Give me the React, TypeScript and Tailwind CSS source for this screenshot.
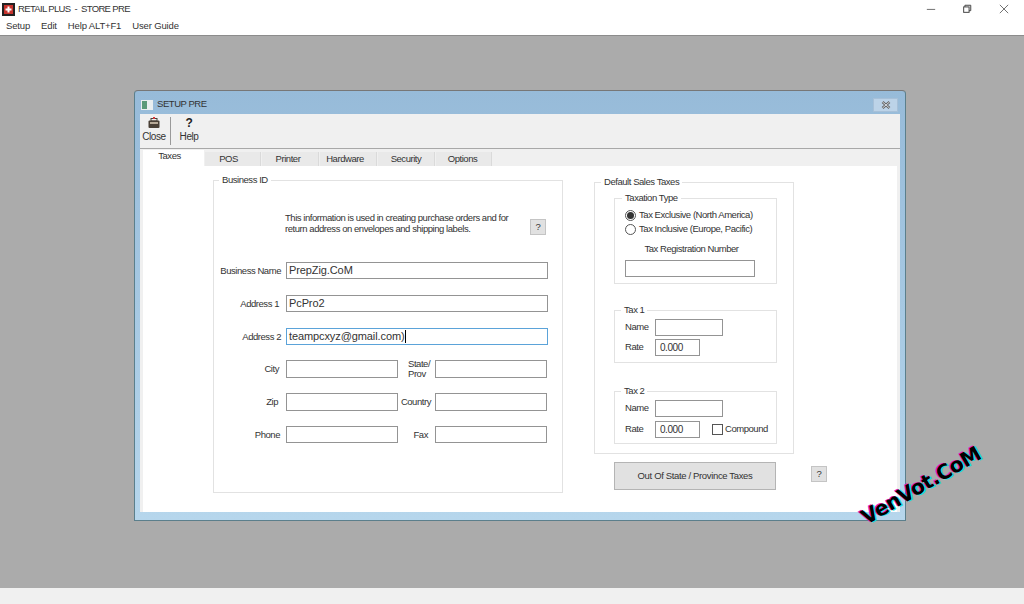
import React from "react";

const font = { fontFamily: '"Liberation Sans", Arial, sans-serif' };

function Input({ value, w, h = "h-[17px]", focus, caret }: { value?: string; w: string; h?: string; focus?: boolean; caret?: boolean }) {
  return (
    <div
      className={`${w} ${h} shrink-0 bg-white border flex items-center pl-[2px] text-[11px] tracking-[-0.1px] text-[#333] leading-none ${
        focus ? "border-[#5ba3d9]" : "border-[#949494]"
      }`}
    >
      {value}
      {caret && <span className="w-px h-[13px] bg-black" />}
    </div>
  );
}

function Label({ children, w = "w-[64px]", pad = "" }: { children: React.ReactNode; w?: string; pad?: string }) {
  return <div className={`${w} ${pad} shrink-0 whitespace-nowrap text-right text-[9.5px] leading-[10px] text-[#333]`}>{children}</div>;
}

function Legend({ children, className }: { children: React.ReactNode; className: string }) {
  return <div className={`absolute -top-[7px] bg-white px-[3px] text-[9.5px] leading-[11px] text-[#333] ${className}`}>{children}</div>;
}

function Help({ className = "" }: { className?: string }) {
  return (
    <div className={`w-4 h-4 shrink-0 bg-[#e1e1e1] border border-[#c4c4c4] flex items-center justify-center text-[9.5px] text-[#333] ${className}`}>?</div>
  );
}

function Tab({ label, w, active, pad = "" }: { label: string; w: string; active?: boolean; pad?: string }) {
  return (
    <div
      className={`${w} ${pad} flex items-center justify-center text-[9.5px] text-[#333] ${
        active ? "bg-white h-[16px] pb-[3px]" : "bg-[#e9e9e9] h-[14px] border-r border-[#dadada]"
      }`}
    >
      {label}
    </div>
  );
}

function FieldRow({ label, value, focus, caret, className, pad }: { label: string; value?: string; focus?: boolean; caret?: boolean; className: string; pad?: string }) {
  return (
    <div className={`flex items-center gap-[5px] ${className}`}>
      <Label pad={pad}>{label}</Label>
      <Input w="w-[262px]" value={value} focus={focus} caret={caret} />
    </div>
  );
}

function SplitRow({ a, b, className, h, padA, padB }: { a: string; b: React.ReactNode; className: string; h: string; padA: string; padB: string }) {
  return (
    <div className={`flex items-center ${h} ${className}`}>
      <Label pad={padA}>{a}</Label>
      <div className="w-[5px]" />
      <Input w="w-[112px]" h={h} />
      <Label w="w-[33px]" pad={padB}>{b}</Label>
      <div className="w-[4px]" />
      <Input w="w-[112px]" h={h} />
    </div>
  );
}

export default function App() {
  return (
    <div className="w-[1024px] h-[604px] overflow-hidden flex flex-col bg-[#ababab] relative tracking-[-0.45px]" style={font}>
      <div className="h-[36px] bg-white border-b border-[#8c8c8c] shrink-0 flex flex-col">
        <div className="flex h-[18px] items-center pl-[2px] text-[#333]">
          <svg width="13" height="13" viewBox="0 0 13 13" className="mr-[3px]">
            <rect width="13" height="13" fill="#222" />
            <rect x="2" y="2" width="9" height="9" fill="#c8342e" />
            <rect x="5.5" y="3.5" width="2" height="6" fill="#fff" />
            <rect x="3.5" y="5.5" width="6" height="2" fill="#fff" />
          </svg>
          <span className="text-[9.5px] tracking-[-0.65px] whitespace-pre">RETAIL PLUS  -  STORE PRE</span>
          <div className="flex-1" />
          <svg width="10" height="10" viewBox="0 0 12 12" className="mr-[26px] -mt-[1px]" fill="none" stroke="#555">
            <path d="M1 6.5H11" />
          </svg>
          <svg width="10" height="10" viewBox="0 0 12 12" className="mr-[27px] -mt-[1px]" fill="none" stroke="#444" strokeWidth="1.2">
            <rect x="2" y="3.5" width="6.5" height="6.5" />
            <path d="M3.5 3.5V1.5H10.5V8H8.5" />
          </svg>
          <svg width="10" height="10" viewBox="0 0 12 12" className="mr-[15px] -mt-[1px]" fill="none" stroke="#555">
            <path d="M1 1L11 11M11 1L1 11" />
          </svg>
        </div>
        <div className="flex items-center h-[17px] pl-[6px] gap-[11px] text-[9.5px] tracking-[-0.15px] text-[#333]">
          <span>Setup</span>
          <span>Edit</span>
          <span>Help ALT+F1</span>
          <span>User Guide</span>
        </div>
      </div>

      <div className="flex-1 relative">
        <div className="ml-[134px] mt-[54px] w-[772px] h-[431px] rounded-t-[4px] border border-[#5b7f8c] border-t-[#777] bg-gradient-to-b from-[#97bbd9] to-[#b6d6ec] flex flex-col">
          <div className="h-[23px] shrink-0 flex items-center pl-[6px] pr-[7px] pt-[4px]">
            <svg width="12" height="10" viewBox="0 0 12 10" className="mr-[4px]">
              <rect width="12" height="10" fill="#e8eef0" />
              <rect x="1" y="1" width="5" height="8" fill="#5a9a7a" />
            </svg>
            <span className="text-[9.5px] text-[#333]">SETUP PRE</span>
            <div className="flex-1" />
            <div className="w-[25px] h-[14px] bg-[#bcd3e8] border border-[#a7c0d8] flex items-center justify-center">
              <svg width="10" height="8" viewBox="0 0 10 8" fill="none">
                <path d="M1.5 1L8.5 7M8.5 1L1.5 7" stroke="#666" strokeWidth="2.6" />
                <path d="M1.5 1L8.5 7M8.5 1L1.5 7" stroke="#dfe7ee" strokeWidth="0.9" />
              </svg>
            </div>
          </div>
          <div className="mx-[5px] flex-1 flex flex-col bg-[#f0f0f0]">
            <div className="h-[35px] shrink-0 border-b border-[#a8a8a8] flex items-stretch pl-[3px] pt-[3px] text-[9.5px] text-[#333]">
              <div className="w-[24px] flex flex-col items-center -ml-[1px]">
                <svg width="12" height="12" viewBox="0 0 12 12">
                  <rect x="0.5" y="3.5" width="11" height="7.5" rx="1" fill="#4a4036" />
                  <rect x="3" y="1.5" width="6" height="2.5" fill="none" stroke="#4a4036" />
                  <rect x="5" y="0" width="2" height="2" fill="#d9383a" />
                  <rect x="2" y="5" width="8" height="2" fill="#b8aa98" />
                </svg>
                <span className="leading-[13px] mt-[1px] text-[10px]">Close</span>
              </div>
              <div className="w-px h-[28px] bg-[#9a9a9a] ml-[4px]" />
              <div className="w-[36px] flex flex-col items-center">
                <span className="text-[12px] font-bold leading-[13px] text-[#222]">?</span>
                <span className="leading-[13px] text-[10px]">Help</span>
              </div>
            </div>
            <div className="h-[17px] shrink-0 flex items-end pl-[3px] gap-px">
              <Tab label="Taxes" w="w-[61px]" active pad="pr-[8px]" />
              <Tab label="POS" w="w-[56px]" pad="pr-[8px]" />
              <Tab label="Printer" w="w-[57px]" pad="pr-[4px]" />
              <Tab label="Hardware" w="w-[57px]" pad="pr-[6px]" />
              <Tab label="Security" w="w-[57px]" />
              <Tab label="Options" w="w-[56px]" pad="pr-[2px]" />
            </div>
            <div className="ml-[3px] mr-[3px] h-[346px] bg-white flex items-start pl-[70px]">
              <div className="relative mt-[14px] w-[350px] h-[313px] shrink-0 border border-[#e2e2e2]">
                <Legend className="left-[5px]">Business ID</Legend>
                <div className="flex items-start mt-[31px] ml-[71px]">
                  <div className="w-[245px] whitespace-nowrap text-[9.5px] leading-[11px] text-[#333]">
                    This information is used in creating purchase orders and for
                    <br />
                    return address on envelopes and shipping labels.
                  </div>
                  <Help className="mt-[7px]" />
                </div>
                <div className="ml-[3px]">
                  <FieldRow label="Business Name" value="PrepZig.CoM" className="mt-[27px]" />
                  <FieldRow label="Address 1" value="PcPro2" className="mt-[16px]" pad="pr-[2px]" />
                  <FieldRow label="Address 2" value="teampcxyz@gmail.com)" focus caret className="mt-[16px]" />
                  <SplitRow a="City" b={<span className="inline-block text-left pr-[1px] w-[23px]">State/<br />Prov</span>} className="mt-[15px]" h="h-[18px]" padA="pr-[2px]" padB="" />
                  <SplitRow a="Zip" b="Country" className="mt-[15px]" h="h-[18px]" padA="pr-[3px]" padB="" />
                  <SplitRow a="Phone" b="Fax" className="mt-[15px]" h="h-[17px]" padA="pr-[1px]" padB="pr-[3px]" />
                </div>
              </div>
              <div className="ml-[31px] mt-[16px] w-[200px] shrink-0 flex flex-col">
                <div className="relative h-[272px] border border-[#e2e2e2] pl-[19px]">
                  <Legend className="left-[6px]">Default Sales Taxes</Legend>
                  <div className="relative mt-[15px] w-[163px] h-[86px] border border-[#e2e2e2] text-[9.5px] text-[#333]">
                    <Legend className="left-[7px]">Taxation Type</Legend>
                    <div className="flex items-center gap-[3px] pl-[10px] mt-[9px] h-[14px]">
                      <div className="w-[11px] h-[11px] rounded-full border border-[#555] flex items-center justify-center">
                        <div className="w-[7px] h-[7px] rounded-full bg-[#333]" />
                      </div>
                      Tax Exclusive (North America)
                    </div>
                    <div className="flex items-center gap-[3px] pl-[10px] h-[14px]">
                      <div className="w-[11px] h-[11px] rounded-full border border-[#555]" />
                      Tax Inclusive (Europe, Pacific)
                    </div>
                    <div className="text-center mt-[7px] leading-[12px] pr-[8px]">Tax Registration Number</div>
                    <div className="ml-[10px] mt-[5px]">
                      <Input w="w-[130px]" />
                    </div>
                  </div>
                  <div className="relative mt-[26px] w-[163px] h-[53px] border border-[#e2e2e2] text-[9.5px] text-[#333]">
                    <Legend className="left-[6px]">Tax 1</Legend>
                    <div className="flex items-center mt-[8px]">
                      <span className="w-[40px] pl-[10px]">Name</span>
                      <Input w="w-[68px]" />
                    </div>
                    <div className="flex items-center mt-[3px]">
                      <span className="w-[40px] pl-[10px]">Rate</span>
                      <div className="w-[45px] h-[17px] border border-[#949494] flex items-center pl-[4px] text-[10px]">0.000</div>
                    </div>
                  </div>
                  <div className="relative mt-[28px] w-[163px] h-[53px] border border-[#e2e2e2] text-[9.5px] text-[#333]">
                    <Legend className="left-[6px]">Tax 2</Legend>
                    <div className="flex items-center mt-[8px]">
                      <span className="w-[40px] pl-[10px]">Name</span>
                      <Input w="w-[68px]" />
                    </div>
                    <div className="flex items-center mt-[4px]">
                      <span className="w-[40px] pl-[10px]">Rate</span>
                      <div className="w-[45px] h-[17px] border border-[#949494] flex items-center pl-[4px] text-[10px]">0.000</div>
                      <div className="w-[11px] h-[11px] border border-[#555] ml-[12px] mr-[2px]" />
                      Compound
                    </div>
                  </div>
                </div>
                <div className="flex items-start mt-[8px] ml-[20px]">
                  <div className="w-[162px] h-[28px] shrink-0 bg-[#e1e1e1] border border-[#b4b4b4] flex items-center justify-center text-[9.5px] tracking-[-0.35px] text-[#333]">
                    Out Of State / Province Taxes
                  </div>
                  <Help className="ml-[35px] mt-[4px]" />
                </div>
              </div>
            </div>
          </div>
          <div className="h-[8px] shrink-0" />
        </div>
        <div
          className="absolute left-[863px] top-[473px] -rotate-[30deg] origin-left text-[20.5px] font-bold text-black leading-none tracking-[-0.5px] whitespace-nowrap"
          style={{ fontFamily: '"DejaVu Sans", sans-serif', textShadow: "1px 1px 0 #19e6e6, -1px -1px 0 #e619c8" }}
        >
          VenVot.CoM
        </div>
      </div>
      <div className="h-[16px] shrink-0 bg-[#f0f0f0]" />
    </div>
  );
}
